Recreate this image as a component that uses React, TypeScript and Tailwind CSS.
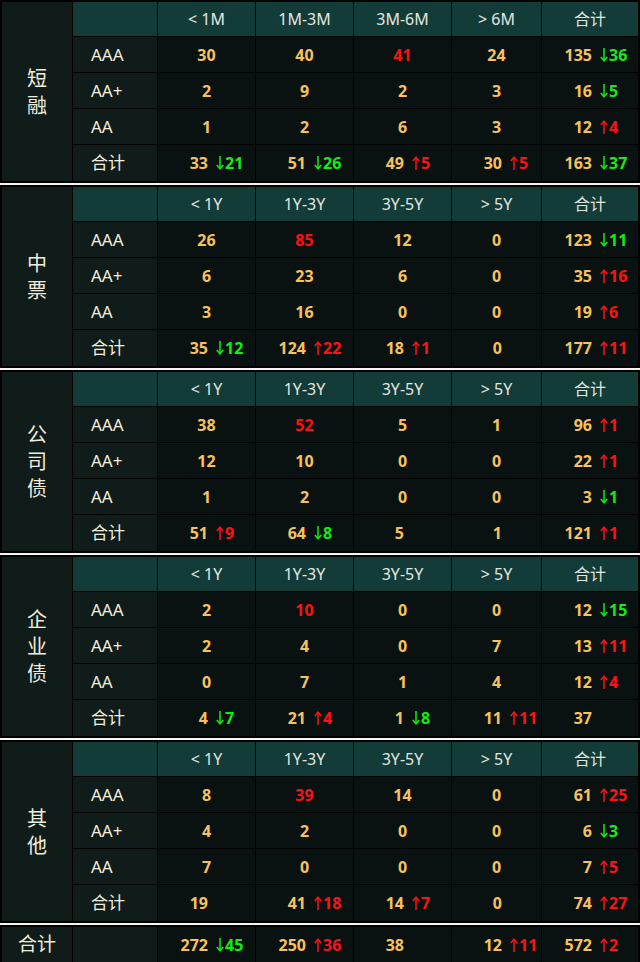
import React from "react"

type Val = { n: number; red?: boolean; d?: number }

type Block = {
  name: string
  heads: string[]
  rows: { label: string; cells: Val[] }[]
}

const v = (n: number, d?: number): Val => ({ n, d })
const r = (n: number): Val => ({ n, red: true })

const YEARS = ["< 1Y", "1Y-3Y", "3Y-5Y", "> 5Y", "合计"]

const blocks: Block[] = [
  {
    name: "短融",
    heads: ["< 1M", "1M-3M", "3M-6M", "> 6M", "合计"],
    rows: [
      { label: "AAA", cells: [v(30), v(40), r(41), v(24), v(135, -36)] },
      { label: "AA+", cells: [v(2), v(9), v(2), v(3), v(16, -5)] },
      { label: "AA", cells: [v(1), v(2), v(6), v(3), v(12, 4)] },
      { label: "合计", cells: [v(33, -21), v(51, -26), v(49, 5), v(30, 5), v(163, -37)] },
    ],
  },
  {
    name: "中票",
    heads: YEARS,
    rows: [
      { label: "AAA", cells: [v(26), r(85), v(12), v(0), v(123, -11)] },
      { label: "AA+", cells: [v(6), v(23), v(6), v(0), v(35, 16)] },
      { label: "AA", cells: [v(3), v(16), v(0), v(0), v(19, 6)] },
      { label: "合计", cells: [v(35, -12), v(124, 22), v(18, 1), v(0), v(177, 11)] },
    ],
  },
  {
    name: "公司债",
    heads: YEARS,
    rows: [
      { label: "AAA", cells: [v(38), r(52), v(5), v(1), v(96, 1)] },
      { label: "AA+", cells: [v(12), v(10), v(0), v(0), v(22, 1)] },
      { label: "AA", cells: [v(1), v(2), v(0), v(0), v(3, -1)] },
      { label: "合计", cells: [v(51, 9), v(64, -8), v(5), v(1), v(121, 1)] },
    ],
  },
  {
    name: "企业债",
    heads: YEARS,
    rows: [
      { label: "AAA", cells: [v(2), r(10), v(0), v(0), v(12, -15)] },
      { label: "AA+", cells: [v(2), v(4), v(0), v(7), v(13, 11)] },
      { label: "AA", cells: [v(0), v(7), v(1), v(4), v(12, 4)] },
      { label: "合计", cells: [v(4, -7), v(21, 4), v(1, -8), v(11, 11), v(37)] },
    ],
  },
  {
    name: "其他",
    heads: YEARS,
    rows: [
      { label: "AAA", cells: [v(8), r(39), v(14), v(0), v(61, 25)] },
      { label: "AA+", cells: [v(4), v(2), v(0), v(0), v(6, -3)] },
      { label: "AA", cells: [v(7), v(0), v(0), v(0), v(7, 5)] },
      { label: "合计", cells: [v(19), v(41, 18), v(14, 7), v(0), v(74, 27)] },
    ],
  },
]

const grand: Val[] = [v(272, -45), v(250, 36), v(38), v(12, 11), v(572, 2)]

const font = { fontFamily: '"Noto Sans", "Noto Sans CJK SC", sans-serif' }

function Arrow({ up }: { up: boolean }) {
  return (
    <svg width="8" height="14" viewBox="0 0 8 14" className="mr-px shrink-0">
      {up ? (
        <g stroke="currentColor" strokeWidth="1.5" fill="none">
          <line x1="4" y1="14" x2="4" y2="1.5" />
          <polyline points="0.8,5 4,1.2 7.2,5" />
        </g>
      ) : (
        <g stroke="currentColor" strokeWidth="1.5" fill="none">
          <line x1="4" y1="0" x2="4" y2="12.5" />
          <polyline points="0.8,9 4,12.8 7.2,9" />
        </g>
      )}
    </svg>
  )
}

function Num({ c, split }: { c: Val; split: boolean }) {
  if (!split) {
    return (
      <div className="flex items-center justify-center bg-[#0a1211]">
        <span className={`text-[16px] font-bold ${c.red ? "text-[#ff1010]" : "text-[#f7c25c]"}`}>
          {c.n}
        </span>
      </div>
    )
  }
  const up = (c.d ?? 0) > 0
  return (
    <div className="flex items-center bg-[#0a1211]">
      <span className="w-[50px] shrink-0 text-right text-[16px] font-bold text-[#f7c25c]">{c.n}</span>
      {c.d ? (
        <span
          className={`ml-[8px] flex items-center text-[16px] font-bold ${up ? "text-[#ff1212]" : "text-[#12ee12]"}`}
        >
          <Arrow up={up} />
          {Math.abs(c.d)}
        </span>
      ) : null}
    </div>
  )
}

function Section({ b }: { b: Block }) {
  return (
    <div className="grid grid-cols-[70px_84px_97px_97px_97px_89px_96px] grid-rows-[34px_35px_35px_35px_36px] gap-px border-2 border-black bg-black">
      <div className="row-span-5 flex flex-col items-center justify-center bg-[#101c1a] text-[20px] leading-[27px] text-[#f1ecdc]">
        {b.name.split("").map((ch) => (
          <span key={ch}>{ch}</span>
        ))}
      </div>
      <div className="bg-[#133b37]" />
      {b.heads.map((h) => (
        <div key={h} className="flex items-center justify-center bg-[#133b37] text-[16px] text-[#e2e6e0]">
          {h}
        </div>
      ))}
      {b.rows.map((row, ri) => (
        <React.Fragment key={row.label}>
          <div className="flex items-center bg-[#101c1a] pl-[18px] text-[17px] text-[#f4eedd]">
            {row.label}
          </div>
          {row.cells.map((c, ci) => (
            <Num key={ci} c={c} split={ri === 3 || ci === 4} />
          ))}
        </React.Fragment>
      ))}
    </div>
  )
}

export default function App() {
  return (
    <div className="flex w-[640px] flex-col bg-black" style={font}>
      {blocks.map((b) => (
        <React.Fragment key={b.name}>
          <Section b={b} />
          <div className="h-[2px] bg-[#f4f4f0]" />
        </React.Fragment>
      ))}
      <div className="grid h-[39px] grid-cols-[70px_84px_97px_97px_97px_89px_96px] gap-px border-2 border-black bg-black">
        <div className="flex items-center justify-center bg-[#101c1a] text-[19px] text-[#f1ecdc]">合计</div>
        <div className="bg-[#101c1a]" />
        {grand.map((c, i) => (
          <Num key={i} c={c} split />
        ))}
      </div>
    </div>
  )
}
